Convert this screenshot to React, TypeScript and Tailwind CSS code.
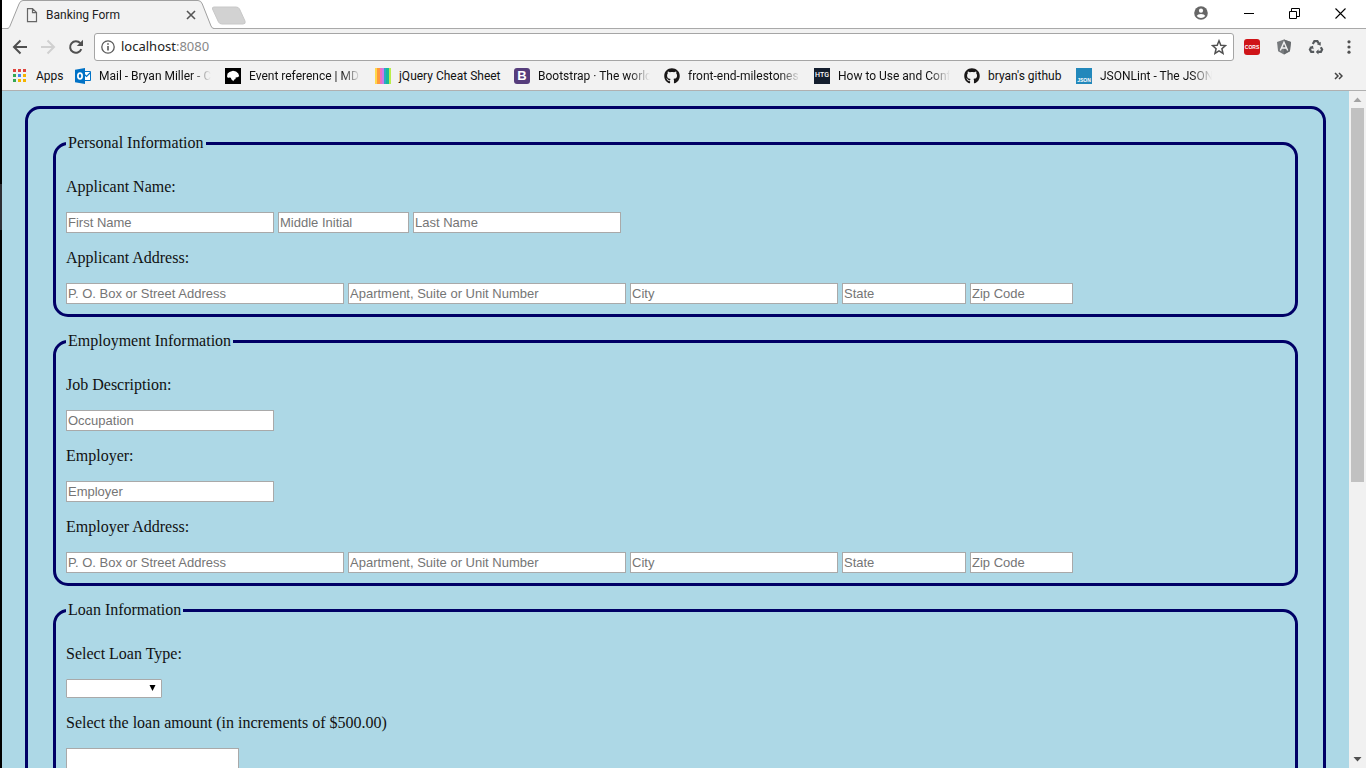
import type { ReactNode } from "react";
import { FaGithub } from "react-icons/fa";

const appDots = ["#e0443e", "#e0443e", "#e0443e", "#35a853", "#4285f4", "#f4b400", "#35a853", "#f4b400", "#f4b400"];

function AppsIcon() {
  return (
    <svg className="size-4" viewBox="0 0 16 16">
      {appDots.map((fill, i) => (
        <rect key={i} x={1 + (i % 3) * 5} y={1 + Math.floor(i / 3) * 5} width="3" height="3" fill={fill} />
      ))}
    </svg>
  );
}

function OutlookIcon() {
  return (
    <svg className="size-4" viewBox="0 0 16 16">
      <path d="M9 3.500h6.500v9H9z" fill="#fff" stroke="#0072c6" />
      <path d="M9 6l2.500 2.500 4-4" fill="none" stroke="#0072c6" strokeWidth="1.200" />
      <path d="M0 1.800L10 0v16L0 14.200z" fill="#0072c6" />
      <ellipse cx="5" cy="8" rx="2.100" ry="2.900" fill="none" stroke="#fff" strokeWidth="1.700" />
    </svg>
  );
}

function MdnIcon() {
  return (
    <svg className="size-4" viewBox="0 0 16 16">
      <path d="M0 0h16v16H0z" fill="#000" />
      <path d="M2 8.500L2.600 5.500 4.500 4 8 2.800l3 .7 2.300 2 .9 2.700-1.700 1-1.800.2-.2 1.600-1.500.8-.6 1.400-1.900-1.700-.7-1.700-1.800-.2L3 10z" fill="#fff" />
    </svg>
  );
}

function StripesIcon() {
  return (
    <svg className="size-4" viewBox="0 0 16 16">
      <path d="M0 0h16v16H0z" fill="#ffd84a" />
      <path d="M2 0h3v16H2z" fill="#ff9a3c" />
      <path d="M5 0h2v16H5z" fill="#ef6fc0" />
      <path d="M7 0h2v16H7z" fill="#c97de8" />
      <path d="M9 0h2v16H9z" fill="#2aa8c8" />
      <path d="M11 0h3v16h-3z" fill="#19b99a" />
      <path d="M14 0h2v16h-2z" fill="#b9ee4a" />
    </svg>
  );
}

function BootstrapIcon() {
  return (
    <span className="flex size-4 items-center justify-center rounded-[3px] bg-[#563d7c] font-['Liberation_Sans',sans-serif] text-[13px] leading-none font-bold text-white">
      B
    </span>
  );
}

function HtgIcon() {
  return (
    <span className="flex size-4 items-center justify-center bg-[#141e2e] font-['Roboto',sans-serif] text-[7px] leading-none font-medium text-white">
      HTG
    </span>
  );
}

function JsonIcon() {
  return (
    <span className="flex size-4 items-end justify-center bg-[#2288bb] pb-px font-['Liberation_Sans',sans-serif] text-[5px] leading-none font-bold text-white">
      JSON
    </span>
  );
}

function GithubIcon() {
  return <FaGithub className="size-4 text-[#191717]" />;
}

const fade = "w-28 [mask-image:linear-gradient(to_right,black_82%,transparent)]";

const bookmarks: { icon: ReactNode; text: string; box: string }[] = [
  { icon: <OutlookIcon />, text: "Mail - Bryan Miller - C", box: fade },
  { icon: <MdnIcon />, text: "Event reference | MD", box: fade },
  { icon: <StripesIcon />, text: "jQuery Cheat Sheet", box: "w-[101px]" },
  { icon: <BootstrapIcon />, text: "Bootstrap · The world", box: fade },
  { icon: <GithubIcon />, text: "front-end-milestones", box: fade },
  { icon: <HtgIcon />, text: "How to Use and Conf", box: fade },
  { icon: <GithubIcon />, text: "bryan's github", box: "w-[74px]" },
  { icon: <JsonIcon />, text: "JSONLint - The JSON", box: fade },
];

function TitleBar() {
  return (
    <div className="flex h-[29px] shrink-0 bg-[linear-gradient(to_top,#a9a9a9_1px,white_1px)]">
      <div className="relative ml-[5px] flex h-[29px] w-[207px] items-center pr-[17px] pl-[17px]">
        <svg className="absolute inset-0 h-[29px] w-[207px]" viewBox="0 0 207 29">
          <path d="M0 28.500C2 28.500 2.500 27 3 26L12 4Q13.300 .5 16 .5H191Q194 .5 195.300 4L204 26Q205 28.500 207 28.500V29H0z" fill="#f2f2f2" />
          <path d="M0 28.500C2 28.500 2.500 27 3 26L12 4Q13.300 .5 16 .5H191Q194 .5 195.300 4L204 26Q205 28.500 207 28.500" fill="none" stroke="#a0a0a0" />
        </svg>
        <svg className="relative h-4 w-4" viewBox="0 0 16 16" fill="none" stroke="#666" strokeWidth="1.200">
          <path d="M3.500 1.600h5l4 4v9h-9zM8.500 1.600v4h4" />
        </svg>
        <span className="relative ml-[6px] grow text-xs text-[#222]">Banking Form</span>
        <button aria-label="Close tab" className="relative">
          <svg className="size-3" viewBox="0 0 12 12" stroke="#555" strokeWidth="1.600">
            <path d="M2 2l8 8M10 2l-8 8" />
          </svg>
        </button>
      </div>
      <button aria-label="New tab" className="-ml-1 flex h-[29px] items-start pt-[6px]">
        <svg className="h-[19px] w-9" viewBox="0 0 36 19">
          <path d="M4 1H26Q28.500 1 29.500 3L35 15Q36 18 33 18H12Q9.500 18 8.500 16L2.500 3Q2 1 4 1z" fill="#d2d2d2" stroke="#c8c8c8" />
        </svg>
      </button>
      <div className="ml-auto flex items-center pr-5 pb-[3px]">
        <button aria-label="Profile" className="mr-9">
          <svg className="size-[14px]" viewBox="0 0 14 14">
            <circle cx="7" cy="7" r="6.800" fill="#666" />
            <circle cx="7" cy="4.700" r="2.100" fill="#fff" />
            <path d="M2.700 10Q3.500 8 7 8t4.300 2Q9.500 12 7 12t-4.300-2z" fill="#fff" />
          </svg>
        </button>
        <button aria-label="Minimize" className="mr-[35px]">
          <svg className="h-3 w-[10px]" viewBox="0 0 10 12">
            <path d="M0 6.500h10" stroke="#000" />
          </svg>
        </button>
        <button aria-label="Restore" className="mr-[35px]">
          <svg className="size-[11px]" viewBox="0 0 11 11" fill="none" stroke="#000">
            <path d="M.5 3.500h7v7h-7zM2.500 3.500v-3h8v8h-3" />
          </svg>
        </button>
        <button aria-label="Close">
          <svg className="size-[11px]" viewBox="0 0 11 11" stroke="#000" strokeWidth="1.100">
            <path d="M.5 .5l10 10M10.500 .5l-10 10" />
          </svg>
        </button>
      </div>
    </div>
  );
}

function Toolbar() {
  return (
    <div className="flex h-8 shrink-0 items-center pt-1 pr-[9px] pl-[10px]">
      <button aria-label="Back">
        <svg className="size-4" viewBox="0 0 16 16" fill="none" stroke="#505050" strokeWidth="2">
          <path d="M15 8H2.500M8.500 1.500L2 8l6.500 6.500" />
        </svg>
      </button>
      <button aria-label="Forward" className="ml-3">
        <svg className="size-4" viewBox="0 0 16 16" fill="none" stroke="#d0d0d0" strokeWidth="2">
          <path d="M1 8h12.500M7.500 1.500L14 8l-6.500 6.500" />
        </svg>
      </button>
      <button aria-label="Reload" className="ml-3">
        <svg className="size-4" viewBox="0 0 16 16">
          <path d="M13.300 10.200A5.800 5.800 0 1 1 12.300 4.200" fill="none" stroke="#505050" strokeWidth="2" />
          <path d="M15 .8V7H8.800z" fill="#505050" />
        </svg>
      </button>
      <div className="ml-[10px] flex h-7 grow items-center rounded-[3px] border border-[#a5a5a5] bg-white pr-[6px] pl-[6px]">
        <svg className="size-[14px]" viewBox="0 0 14 14">
          <circle cx="7" cy="7" r="6.200" fill="none" stroke="#5a5a5a" strokeWidth="1.300" />
          <path d="M6.200 6h1.600v4.500H6.200zM6.200 3.200h1.600v1.600H6.200z" fill="#5a5a5a" />
        </svg>
        <a href="http://localhost:8080" className="ml-[6px] grow font-['Noto_Sans',sans-serif] text-[13px] text-[#222]">
          localhost<span className="text-[#888]">:8080</span>
        </a>
        <button aria-label="Bookmark this page">
          <svg className="size-4" viewBox="0 0 16 16" fill="none" stroke="#505050" strokeWidth="1.500">
            <path d="M8 1.800l1.800 4.400 4.700.4-3.600 3.100 1.100 4.600L8 11.800l-4 2.500 1.100-4.600L1.500 6.600l4.700-.4z" />
          </svg>
        </button>
      </div>
      <button
        aria-label="CORS extension"
        className="ml-[10px] flex size-4 items-center justify-center rounded-[3px] bg-[#cf1418] font-['Liberation_Sans_Narrow','Liberation_Sans',sans-serif] text-[5px] leading-none font-bold text-white"
      >
        CORS
      </button>
      <button aria-label="Angular extension" className="ml-4">
        <svg className="size-4" viewBox="0 0 16 16">
          <path d="M8 .5l7 2.400-1.100 9.300L8 15.500l-5.900-3.300L1 2.900z" fill="#777a7d" />
          <path d="M8 .5l7 2.400-1.100 9.300L8 15.500z" fill="#66696c" />
          <path d="M4.300 11.500L8 3.200l3.700 8.300M5.700 9h4.600" fill="none" stroke="#f2f2f2" strokeWidth="1.400" />
        </svg>
      </button>
      <button aria-label="Recycle extension" className="ml-4">
        <svg className="size-4" viewBox="0 0 16 16" fill="none" stroke="#55595c" strokeWidth="2.200">
          <path d="M4.800 5L6.400 2.200h3L10.800 4.500M12.800 8.200l1.300 2.400-1.200 2.300h-2.800M6.200 12.900H3.200l-1.300-2.300 1.300-2.300" />
          <path d="M12.700 2.800v4L9 5.200zM10.500 10.300v5.200L7.800 12.900zM1.300 8l3.700-1.300.6 3.600z" fill="#55595c" stroke="none" />
        </svg>
      </button>
      <button aria-label="Menu" className="ml-[17px]">
        <svg className="size-4" viewBox="0 0 16 16" fill="#505050">
          <circle cx="8" cy="2.800" r="1.600" />
          <circle cx="8" cy="8" r="1.600" />
          <circle cx="8" cy="13.200" r="1.600" />
        </svg>
      </button>
    </div>
  );
}

function BookmarkBar() {
  return (
    <div className="flex h-[30px] shrink-0 items-center border-b border-[#b0b0b0] pr-[23px] pl-[10px] text-xs whitespace-nowrap text-[#111]">
      <a href="#apps" className="mr-[14px] flex items-center gap-2">
        <AppsIcon />
        <span className="w-[25px]">Apps</span>
      </a>
      <nav className="flex gap-[14px]">
        {bookmarks.map((b) => (
          <a key={b.text} href="#bookmark" className="flex items-center gap-2">
            {b.icon}
            <span className={b.box}>{b.text}</span>
          </a>
        ))}
      </nav>
      <button aria-label="More bookmarks" className="ml-auto">
        <svg className="h-2 w-[9px]" viewBox="0 0 9 8" fill="none" stroke="#444" strokeWidth="1.500">
          <path d="M1 1l3 3-3 3M5 1l3 3-3 3" />
        </svg>
      </button>
    </div>
  );
}

function Section({ title, children }: { title: string; children: ReactNode }) {
  return (
    <fieldset className="min-w-0 rounded-[15px] border-[3px] border-[#000066] px-[10px] pt-[25px] pb-[10px]">
      <legend className="px-[2px] pb-[2px] leading-[17px]">{title}</legend>
      <div className="flex flex-col gap-4">{children}</div>
    </fieldset>
  );
}

function Field({ id, label, children }: { id: string; label: string; children: ReactNode }) {
  return (
    <div className="flex flex-col gap-[17px]">
      <label htmlFor={id} className="self-start leading-[17px]">
        {label}
      </label>
      <div className="flex gap-1">{children}</div>
    </div>
  );
}

function TextBox({ id, hint, width }: { id?: string; hint: string; width: string }) {
  return (
    <input
      id={id}
      type="text"
      aria-label={hint}
      placeholder={hint}
      className={`h-[21px] border border-[#a9a9a9] bg-white px-px font-['Liberation_Sans',sans-serif] text-[13px] text-black placeholder:text-[#757575] ${width}`}
    />
  );
}

function AddressRow({ id }: { id: string }) {
  return (
    <>
      <TextBox id={id} hint="P. O. Box or Street Address" width="w-[278px]" />
      <TextBox hint="Apartment, Suite or Unit Number" width="w-[278px]" />
      <TextBox hint="City" width="w-[208px]" />
      <TextBox hint="State" width="w-[124px]" />
      <TextBox hint="Zip Code" width="w-[103px]" />
    </>
  );
}

function ScrollBar() {
  return (
    <div className="flex w-[17px] shrink-0 flex-col items-center bg-[#f1f1f1]">
      <svg className="h-[17px] w-[17px] shrink-0" viewBox="0 0 17 17">
        <path d="M4.500 11l4-4.500 4 4.500z" fill="#a3a3a3" />
      </svg>
      <div className="w-[13px] grow-[374] bg-[#c1c1c1]" />
      <div className="grow-[269]" />
      <svg className="h-[17px] w-[17px] shrink-0" viewBox="0 0 17 17">
        <path d="M4.500 6h8l-4 4.500z" fill="#505050" />
      </svg>
    </div>
  );
}

export default function App() {
  return (
    <div className="flex h-screen overflow-hidden bg-[#f2f2f2] font-['Roboto',sans-serif]">
      <div className="w-[2px] shrink-0 bg-[linear-gradient(#000_184px,#2c2e33_184px,#2c2e33_230px,#000_230px)]" />
      <div className="flex min-w-0 grow flex-col">
        <TitleBar />
        <Toolbar />
        <BookmarkBar />
        <div className="flex min-h-0 grow">
          <main className="min-w-0 grow overflow-hidden bg-[#add8e6] px-[23px] pt-[15px] font-['Liberation_Serif',serif] text-base text-[#111]">
            <form className="flex flex-col gap-[15px] rounded-[15px] border-[3px] border-[#000066] p-[25px]">
              <Section title="Personal Information">
                <Field id="name" label="Applicant Name:">
                  <TextBox id="name" hint="First Name" width="w-[208px]" />
                  <TextBox hint="Middle Initial" width="w-[131px]" />
                  <TextBox hint="Last Name" width="w-[208px]" />
                </Field>
                <Field id="address" label="Applicant Address:">
                  <AddressRow id="address" />
                </Field>
              </Section>
              <Section title="Employment Information">
                <Field id="job" label="Job Description:">
                  <TextBox id="job" hint="Occupation" width="w-[208px]" />
                </Field>
                <Field id="employer" label="Employer:">
                  <TextBox id="employer" hint="Employer" width="w-[208px]" />
                </Field>
                <Field id="employer-address" label="Employer Address:">
                  <AddressRow id="employer-address" />
                </Field>
              </Section>
              <Section title="Loan Information">
                <Field id="loan-type" label="Select Loan Type:">
                  <div className="relative flex">
                    <select id="loan-type" className="h-[19px] w-24 appearance-none rounded-[1px] border border-[#a9a9a9] bg-white">
                      <option value=""></option>
                    </select>
                    <svg className="pointer-events-none absolute top-[6px] right-[6px] h-[6px] w-[7px]" viewBox="0 0 7 6">
                      <path d="M.5 0h6L3.500 6z" fill="#000" />
                    </svg>
                  </div>
                </Field>
                <Field id="amount" label="Select the loan amount (in increments of $500.00)">
                  <input id="amount" type="number" className="h-[21px] w-[173px] border border-[#a9a9a9] bg-white" />
                </Field>
              </Section>
            </form>
          </main>
          <ScrollBar />
        </div>
      </div>
    </div>
  );
}
